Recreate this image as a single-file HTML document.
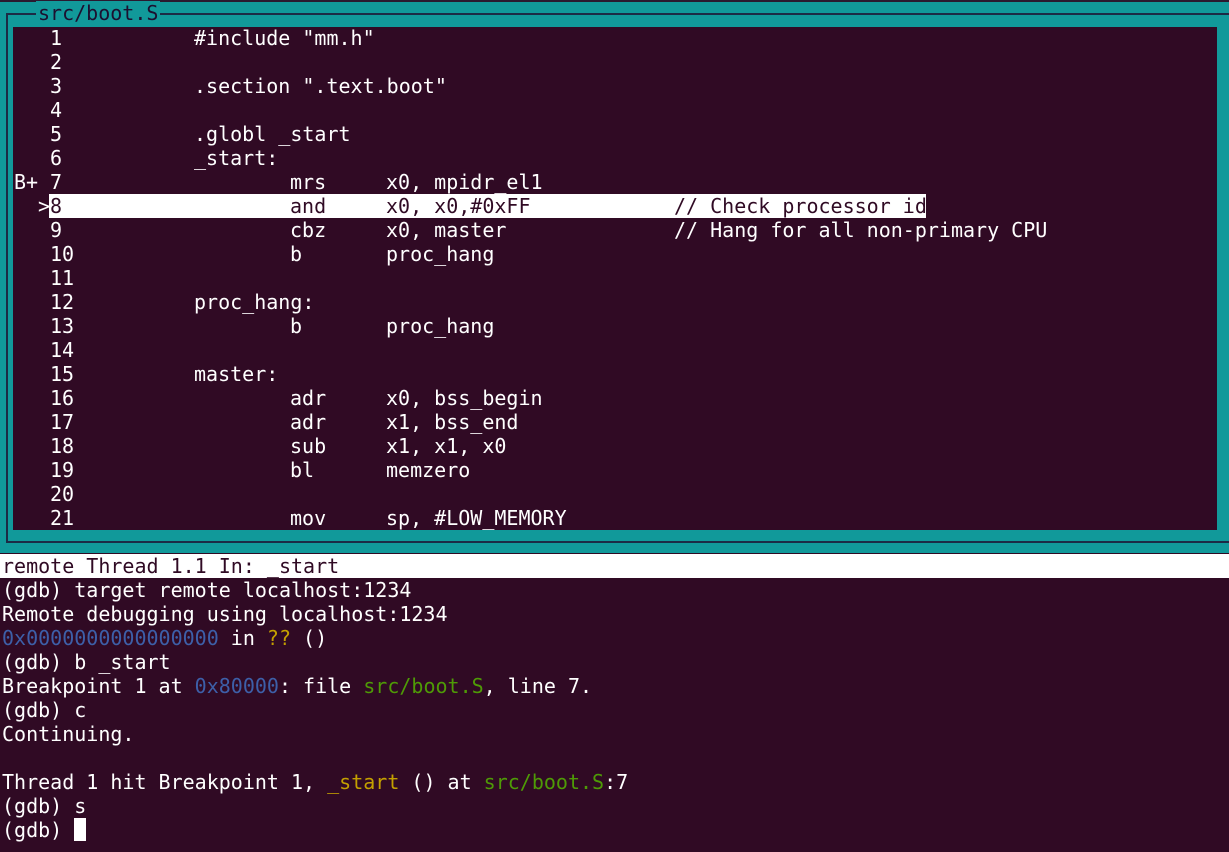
<!DOCTYPE html>
<html><head><meta charset="utf-8"><style>
*{margin:0;padding:0;box-sizing:border-box}
html,body{width:1229px;height:852px;overflow:hidden;background:#300a24}
body{position:relative;font-family:"DejaVu Sans Mono","Liberation Mono",monospace;font-size:20px;color:#fff}
.teal{position:absolute;left:0;top:2px;width:1229px;height:551px;background:#11999a}
.topline{position:absolute;left:0;top:0;width:1229px;height:2px;background:#2a1a30}
.frame{position:absolute;left:6px;top:13px;width:1240px;height:530px;border:2px solid #1c2b45}
.inner{position:absolute;left:13px;top:27px;width:1204px;height:503px;background:#300a24}
.title{position:absolute;left:36px;top:1px;height:24px;line-height:24px;background:#11999a;color:#1c1030;padding:0 2px;white-space:pre}
.ln{position:absolute;left:2px;height:24px;line-height:24px;white-space:pre}
.r{position:absolute;left:0;width:1229px;height:24px;line-height:24px;white-space:pre}
.r span{position:absolute;top:0}
.p{left:14px}.n{left:50px}.l{left:194px}.m{left:290px}.o{left:386px}.c{left:674px}
.hl{position:absolute;left:49px;width:877px;height:24px;background:#fff}
.status{position:absolute;left:0;top:554px;width:1229px;height:24px;background:#fff}
.b{color:#3d5fa8}.y{color:#c4a000}.g{color:#4e9a06}
.dark{color:#300a24}
.r .dark,.r.dark span{color:#300a24}
.cur{position:absolute;left:74px;top:818px;width:12px;height:23px;background:#fff}
</style></head><body>
<div class="topline"></div>
<div class="teal"></div>
<div class="frame"></div>
<div class="inner"></div>
<div class="title">src/boot.S</div>
<div class="hl" style="top:194px"></div>
<div class="r" style="top:26px"><span class="n">1</span><span class="l">#include "mm.h"</span></div>
<div class="r" style="top:50px"><span class="n">2</span></div>
<div class="r" style="top:74px"><span class="n">3</span><span class="l">.section ".text.boot"</span></div>
<div class="r" style="top:98px"><span class="n">4</span></div>
<div class="r" style="top:122px"><span class="n">5</span><span class="l">.globl _start</span></div>
<div class="r" style="top:146px"><span class="n">6</span><span class="l">_start:</span></div>
<div class="r" style="top:170px"><span class="p">B+</span><span class="n">7</span><span class="m">mrs</span><span class="o">x0, mpidr_el1</span></div>
<div class="r dark" style="top:194px"><span style="left:38px;color:#fff">&gt;</span><span class="n">8</span><span class="m">and</span><span class="o">x0, x0,#0xFF</span><span class="c">// Check processor id</span></div>
<div class="r" style="top:218px"><span class="n">9</span><span class="m">cbz</span><span class="o">x0, master</span><span class="c">// Hang for all non-primary CPU</span></div>
<div class="r" style="top:242px"><span class="n">10</span><span class="m">b</span><span class="o">proc_hang</span></div>
<div class="r" style="top:266px"><span class="n">11</span></div>
<div class="r" style="top:290px"><span class="n">12</span><span class="l">proc_hang:</span></div>
<div class="r" style="top:314px"><span class="n">13</span><span class="m">b</span><span class="o">proc_hang</span></div>
<div class="r" style="top:338px"><span class="n">14</span></div>
<div class="r" style="top:362px"><span class="n">15</span><span class="l">master:</span></div>
<div class="r" style="top:386px"><span class="n">16</span><span class="m">adr</span><span class="o">x0, bss_begin</span></div>
<div class="r" style="top:410px"><span class="n">17</span><span class="m">adr</span><span class="o">x1, bss_end</span></div>
<div class="r" style="top:434px"><span class="n">18</span><span class="m">sub</span><span class="o">x1, x1, x0</span></div>
<div class="r" style="top:458px"><span class="n">19</span><span class="m">bl</span><span class="o">memzero</span></div>
<div class="r" style="top:482px"><span class="n">20</span></div>
<div class="r" style="top:506px"><span class="n">21</span><span class="m">mov</span><span class="o">sp, #LOW_MEMORY</span></div>
<div class="status"></div>
<div class="ln dark" style="top:554px">remote Thread 1.1 In: _start</div>
<div class="ln" style="top:578px">(gdb) target remote localhost:1234</div>
<div class="ln" style="top:602px">Remote debugging using localhost:1234</div>
<div class="ln" style="top:626px"><span class="b">0x0000000000000000</span> in <span class="y">??</span> ()</div>
<div class="ln" style="top:650px">(gdb) b _start</div>
<div class="ln" style="top:674px">Breakpoint 1 at <span class="b">0x80000</span>: file <span class="g">src/boot.S</span>, line 7.</div>
<div class="ln" style="top:698px">(gdb) c</div>
<div class="ln" style="top:722px">Continuing.</div>
<div class="ln" style="top:770px">Thread 1 hit Breakpoint 1, <span class="y">_start</span> () at <span class="g">src/boot.S</span>:7</div>
<div class="ln" style="top:794px">(gdb) s</div>
<div class="ln" style="top:818px">(gdb) </div>
<div class="cur"></div>
</body></html>
